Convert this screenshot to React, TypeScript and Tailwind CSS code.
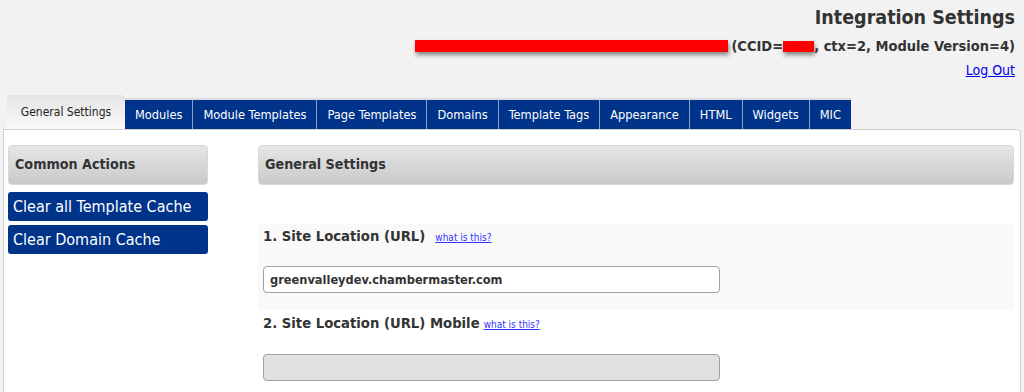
const tabs = [
  "Modules",
  "Module Templates",
  "Page Templates",
  "Domains",
  "Template Tags",
  "Appearance",
  "HTML",
  "Widgets",
  "MIC",
]

function Redacted({ className }: { className: string }) {
  return <span className={`inline-block bg-[#ff0000] shadow-[1px_3px_4px_rgba(0,0,0,0.45)] ${className}`} />
}

export default function App() {
  return (
    <div className="min-h-screen bg-[#f2f2f2] font-['DejaVu_Sans_Condensed','DejaVu_Sans',sans-serif] text-[#333]">
      {/* header */}
      <div className="flex flex-col items-end pr-[9px] pt-[5px]">
        <h1 className="text-[19.5px] font-bold leading-[26px] text-[#333]">Integration Settings</h1>
        <div className="mt-[7px] flex items-center text-[14.5px] font-bold leading-[16px]">
          <Redacted className="h-[12px] w-[313px]" />
          <span className="ml-[3px]">(CCID=</span>
          <Redacted className="h-[11px] w-[31px]" />
          <span>, ctx=2, Module Version=4)</span>
        </div>
        <a href="#" className="mt-[7px] text-[14px] leading-[18px] text-[#0000ee] underline">
          Log Out
        </a>
      </div>

      {/* tabs */}
      <div className="mt-[16px] flex items-end pl-[7px]">
        <div className="flex h-[34px] w-[118px] items-center justify-center rounded-t-[4px] bg-gradient-to-b from-[#e4e4e4] to-[#fafafa] text-[12px] text-[#222]">
          General Settings
        </div>
        <div className="flex h-[31px] border-t-2 border-[#dcdcdc] bg-[#00338a]">
          {tabs.map((t) => (
            <div
              key={t}
              className="flex items-center border-l border-[#8da0c4] px-[10px] text-[12.7px] text-white first:border-l-0"
            >
              {t}
            </div>
          ))}
        </div>
      </div>

      {/* panel */}
      <div className="mx-[3px] flex h-[264px] gap-[50px] rounded-tr-[5px] border border-b-0 border-[#cfcfcf] bg-white pl-[4px] pr-[6px] pt-[15px]">
        <div className="w-[200px] shrink-0">
          <div className="flex h-[40px] items-center rounded-[4px] border border-[#d8d8d8] bg-gradient-to-b from-[#e6e6e6] to-[#c9c9c9] px-[6px] text-[14.2px] font-bold text-[#333]">
            Common Actions
          </div>
          <div className="mt-[7px] flex flex-col gap-[4px]">
            <button className="flex h-[29px] items-center rounded-[3px] bg-[#00338a] px-[5px] text-left text-[16px] text-white">
              Clear all Template Cache
            </button>
            <button className="flex h-[29px] items-center rounded-[3px] bg-[#00338a] px-[5px] text-left text-[16px] text-white">
              Clear Domain Cache
            </button>
          </div>
        </div>

        <div className="flex-1">
          <div className="flex h-[40px] items-center rounded-[4px] border border-[#d8d8d8] bg-gradient-to-b from-[#e6e6e6] to-[#c9c9c9] px-[6px] text-[14.2px] font-bold text-[#333]">
            General Settings
          </div>

          <div className="mt-[39px] bg-[#f9f9f9] px-[5px] pb-[17px] pt-[2px]">
            <div className="flex items-baseline gap-[10px] leading-[20px]">
              <span className="text-[14.7px] font-bold text-[#333]">1. Site Location (URL)</span>
              <a href="#" className="text-[10px] text-[#3333ff] underline">
                what is this?
              </a>
            </div>
            <div className="mt-[18px] flex h-[27px] w-[457px] items-center rounded-[4px] border border-[#a0a0a0] bg-white px-[6px] text-[12.7px] font-bold text-[#333]">
              greenvalleydev.chambermaster.com
            </div>
          </div>

          <div className="mt-[3px] px-[5px]">
            <div className="flex items-baseline gap-[4px] leading-[20px]">
              <span className="text-[14.7px] font-bold text-[#333]">2. Site Location (URL) Mobile</span>
              <a href="#" className="text-[10px] text-[#3333ff] underline">
                what is this?
              </a>
            </div>
            <div className="mt-[19px] h-[27px] w-[457px] rounded-[4px] border border-[#a0a0a0] bg-[#e1e1e1]" />
          </div>
        </div>
      </div>
    </div>
  )
}
